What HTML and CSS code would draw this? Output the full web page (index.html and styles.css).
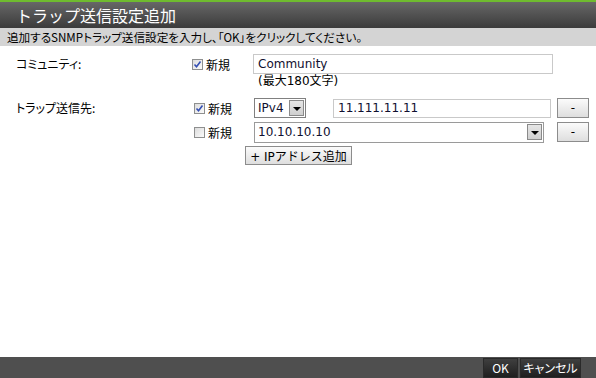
FILE: index.html
```html
<!DOCTYPE html>
<html lang="ja">
  <head>
    <meta charset="utf-8" />
    <title>トラップ送信設定追加</title>
    <link rel="stylesheet" href="styles.css">
  </head>

  <body>
    <div class="dialog">
      <div class="dialog__head">トラップ送信設定追加</div>
      <div class="dialog__desc">追加するSNMPトラップ送信設定を入力し、「OK」をクリックしてください。</div>

      <div class="dialog__body">
        <!-- コミュニティ -->
        <div class="field">
          <div class="field__label">コミュニティ:</div>
          <div class="field__ctrl">
            <div class="row">
              <label class="chk">
                <span class="chk__box chk__box_on"></span>新規
              </label>
              <input class="text text_community" type="text" value="Community" />
            </div>
            <div class="hint">(最大180文字)</div>
          </div>
        </div>

        <!-- トラップ送信先 -->
        <div class="field field_trap">
          <div class="field__label">トラップ送信先:</div>
          <div class="field__ctrl">
            <div class="row">
              <label class="chk chk_shift">
                <span class="chk__box chk__box_on"></span>新規
              </label>
              <div class="select select_small">
                <span class="select__value">IPv4</span>
                <span class="select__arrow"></span>
              </div>
              <input class="text text_ip" type="text" value="11.111.11.11" />
              <button class="btn btn_minus">-</button>
            </div>
            <div class="row row_second">
              <label class="chk chk_shift">
                <span class="chk__box"></span>新規
              </label>
              <div class="select select_wide">
                <span class="select__value">10.10.10.10</span>
                <span class="select__arrow"></span>
              </div>
              <button class="btn btn_minus btn_far">-</button>
            </div>
            <button class="btn btn_add">+ IPアドレス追加</button>
          </div>
        </div>
      </div>

      <div class="dialog__foot">
        <button class="action">OK</button>
        <button class="action action_cancel">キャンセル</button>
      </div>
    </div>
  </body>
</html>
```

FILE: styles.css
```css
body {
  margin: 0;
  font-family: "DejaVu Sans", "Noto Sans CJK JP", sans-serif;
  font-size: 12px;
  color: #000;
  background: #fff;
}

.dialog {
  display: flex;
  flex-direction: column;
  width: 596px;
  height: 378px;
  overflow: hidden;
}

.dialog__head {
  height: 26px;
  padding-left: 16px;
  border-top: 2px solid #6fbb2f;
  background: linear-gradient(#676767, #3b3b3b);
  color: #fff;
  font-family: "Noto Sans CJK JP", sans-serif;
  font-size: 16px;
  line-height: 26px;
}

.dialog__desc {
  height: 18px;
  padding-left: 7px;
  background: #d4d4d4;
  font-family: "Noto Sans CJK JP", sans-serif;
  font-feature-settings: "palt";
  font-size: 11.6px;
  line-height: 18px;
}

.dialog__body {
  flex: 1;
  padding: 8px 0 0 16px;
}

.field {
  display: grid;
  grid-template-columns: 176px 1fr;
}

.field__label {
  padding-top: 1px;
  font-family: "Noto Sans CJK JP", sans-serif;
  font-feature-settings: "palt";
  line-height: 18px;
}

.field_trap {
  margin-top: 10px;
}

.row {
  display: flex;
  align-items: center;
  height: 20px;
}

.row_second {
  margin-top: 4px;
}

.chk {
  display: flex;
  align-items: center;
  gap: 3px;
  width: 61px;
  font-family: "Noto Sans CJK JP", sans-serif;
}

.chk_shift {
  padding-left: 2px;
  width: 60px;
}

.chk__box {
  box-sizing: border-box;
  width: 11px;
  height: 11px;
  border: 1px solid #8e8f8f;
  background: linear-gradient(135deg, #dcdcdc, #fbfbfb);
}

.chk__box_on {
  background: url("data:image/svg+xml;charset=utf8,%3Csvg xmlns='http://www.w3.org/2000/svg' viewBox='0 0 9 9'%3E%3Cpath d='M1.5 4.5l2 2.2 4-5.2' fill='none' stroke='%23344fb3' stroke-width='1.6'/%3E%3C/svg%3E") no-repeat center / 9px 9px,
    linear-gradient(135deg, #dcdcdc, #fbfbfb);
}

.text {
  box-sizing: border-box;
  height: 20px;
  margin: 0;
  padding: 0 4px;
  border: 1px solid #c9c9c9;
  font-family: "DejaVu Sans", sans-serif;
  font-size: 12px;
  color: #101030;
}

.text_community {
  width: 300px;
}

.text_ip {
  width: 218px;
  height: 19px;
  margin-left: 27px;
}

.hint {
  margin: 1px 0 0 66px;
  font-family: "DejaVu Sans", "Noto Sans CJK JP", sans-serif;
  line-height: 13px;
}

.select {
  box-sizing: border-box;
  display: flex;
  align-items: center;
  height: 20px;
  padding: 0 1px 0 3px;
  border: 1px solid #9a9a9a;
  background: #fff;
  color: #101030;
}

.select_small {
  width: 52px;
  border-color: #808080;
}

.select_wide {
  width: 290px;
  height: 21px;
}

.select__value {
  flex: 1;
}

.select__arrow {
  box-sizing: border-box;
  position: relative;
  width: 15px;
  height: 16px;
  border: 1px solid #8a8a8a;
  background: linear-gradient(#e6e6e6, #cfcfcf);
}

.select__arrow::after {
  content: "";
  position: absolute;
  top: 6px;
  left: 3px;
  border-top: 4px solid #000;
  border-left: 4px solid transparent;
  border-right: 4px solid transparent;
}

.btn {
  box-sizing: border-box;
  margin: 0;
  padding: 0;
  border: 1px solid #8c8c8c;
  background: linear-gradient(#fbfbfb, #dedede);
  font-family: "DejaVu Sans", "Noto Sans CJK JP", sans-serif;
  font-size: 12px;
  color: #000;
}

.btn_minus {
  width: 32px;
  height: 20px;
  margin-left: 6px;
}

.btn_far {
  margin-left: 13px;
}

.btn_add {
  display: block;
  width: 107px;
  height: 19px;
  margin: 4px 0 0 53px;
  white-space: pre;
}

.dialog__foot {
  display: flex;
  justify-content: flex-end;
  align-items: flex-end;
  gap: 2px;
  height: 21px;
  padding-right: 15px;
  background: #4f4f4f;
}

.action {
  width: 35px;
  height: 20px;
  margin: 0;
  padding: 0;
  border: 1px solid #2a2a2a;
  background: linear-gradient(#3f3f3f, #1f1f1f);
  color: #fff;
  font-family: "Noto Sans CJK JP", sans-serif;
  font-feature-settings: "palt";
  font-size: 12px;
  line-height: 18px;
  white-space: nowrap;
}

.action_cancel {
  width: 61px;
}
```
